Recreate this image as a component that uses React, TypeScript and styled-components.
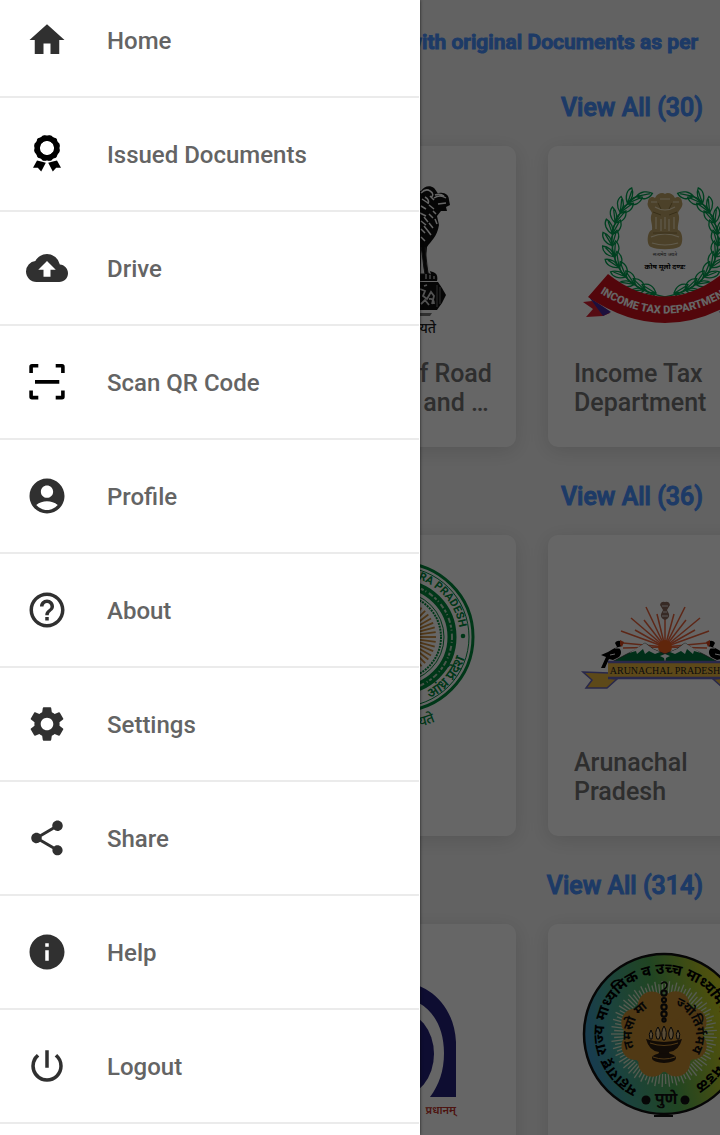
import React from 'react';
import styled, { createGlobalStyle } from 'styled-components';
import {
  MdHome,
  MdCloudUpload,
  MdAccountCircle,
  MdHelpOutline,
  MdSettings,
  MdShare,
  MdInfo,
  MdPowerSettingsNew,
} from 'react-icons/md';

const GlobalStyle = createGlobalStyle`
  * { box-sizing: border-box; }
  body {
    margin: 0;
    background: #f5f5f5;
    font-family: Roboto, "Noto Sans", sans-serif;
  }
`;

const Shell = styled.div`
  position: relative;
  height: 100vh;
  overflow: hidden;
`;

const Notice = styled.p`
  display: flex;
  justify-content: flex-end;
  margin: 0;
  padding: 28px 22px 2px;
  font-size: 21px;
  line-height: 28px;
  font-weight: 600;
  -webkit-text-stroke: 1px #4a92ff;
  white-space: nowrap;
  color: #4a92ff;
`;

const SectionHeader = styled.header`
  display: flex;
  justify-content: flex-end;
  padding: 36px 17px 24px;
`;

const ViewAll = styled.a`
  font-size: 25px;
  line-height: 28px;
  font-weight: 500;
  -webkit-text-stroke: 1px #4a92ff;
  color: #4a92ff;
  text-decoration: none;
`;

const CardRow = styled.div`
  display: flex;
  gap: 32px;
  padding: 0 16px;
`;

const Card = styled.article`
  flex: none;
  display: flex;
  flex-direction: column;
  align-items: center;
  gap: 20px;
  width: 234px;
  height: 301px;
  padding: 29px 26px;
  border-radius: 10px;
  background: #fff;
  box-shadow: 0 4px 20px rgba(0, 0, 0, 0.12);
`;

const Emblem = styled.svg`
  flex: none;
  width: 164px;
  height: 164px;
  overflow: visible;
`;

const CardTitle = styled.h3`
  align-self: stretch;
  margin: 0;
  font-size: 25px;
  line-height: 29px;
  font-weight: 500;
  white-space: nowrap;
  color: #747474;
`;

const Scrim = styled.div`
  position: absolute;
  inset: 0;
  background: rgba(0, 0, 0, 0.6);
`;

const Drawer = styled.nav`
  position: absolute;
  top: 0;
  bottom: 0;
  left: 0;
  width: 420px;
  max-width: 80%;
  padding-right: 1px;
  overflow: hidden;
  background: #fff;
  box-shadow: 0 0 3px rgba(0, 0, 0, 0.7);
`;

const Menu = styled.ul`
  margin: -16px 0 0;
  padding: 0;
  list-style: none;
`;

const MenuItem = styled.li`
  border-bottom: 2px solid #ebebeb;
`;

const MenuLink = styled.a<{ $black?: boolean }>`
  display: flex;
  align-items: center;
  gap: 39px;
  height: 112px;
  padding: 0 26px;
  color: ${(p) => (p.$black ? '#000' : '#303030')};
  text-decoration: none;

  svg {
    flex: none;
    width: 42px;
    height: 42px;
  }
`;

const MenuLabel = styled.span`
  padding-top: 2px;
  font-size: 24px;
  line-height: 28px;
  font-weight: 500;
  color: #646464;
`;

const deva = '"Noto Sans Devanagari", "Noto Sans", sans-serif';

function polar(cx: number, cy: number, r: number, deg: number): [number, number] {
  const a = (deg * Math.PI) / 180;
  return [cx + r * Math.cos(a), cy + r * Math.sin(a)];
}

function RibbonIcon() {
  const bumps = [];
  for (let i = 0; i < 12; i++) {
    const [x, y] = polar(21, 15, 10, i * 30 + 15);
    bumps.push(<circle key={i} cx={x} cy={y} r="3.1" />);
  }
  return (
    <svg viewBox="0 0 42 42" fill="currentColor" aria-hidden="true">
      {bumps}
      <circle cx="21" cy="15" r="9.8" fill="none" stroke="currentColor" strokeWidth="5.4" />
      <circle cx="21" cy="15" r="6.8" fill="#fff" />
      <path d="M11 27.5 Q15 28.5 19.8 29.8 L15.2 38.5 L11.8 34.8 H7 Z M31 27.5 Q27 28.5 22.2 29.8 L26.8 38.5 L30.2 34.8 H35 Z" />
    </svg>
  );
}

function ScanIcon() {
  return (
    <svg viewBox="0 0 42 42" fill="none" stroke="currentColor" strokeWidth="3.6" aria-hidden="true">
      <path d="M12.3 4.8 H6 Q5.1 4.8 5.1 5.7 V12 M29.7 4.8 H36 Q36.9 4.8 36.9 5.7 V12 M12.3 36.6 H6 Q5.1 36.6 5.1 35.7 V29.4 M29.7 36.6 H36 Q36.9 36.6 36.9 35.7 V29.4 M9 20.9 H33.3" />
    </svg>
  );
}

function LionHalf() {
  return (
    <g>
      <path
        d="M82 20 C90 12 98 14 104 16 C107 11 113 10 117 13 C120 16 120 19 122 18 C128 17 132 20 132 25 L133 30 L129 32 L130 36 L124 36 L120 41 L122 50 C120 62 114 66 110 72 L109 84 C110 92 111 96 116 97 C120 98 121 102 120 106 L82 106 Z"
        fill="#111"
      />
      <path
        d="M104 18 q5 -5 9 -2 q5 3 1 7 M117 23 q6 -4 12 0 M118 20 q5 -2 9 1 M121 29 l8 -1 M105 24 l6 4 M104 31 l5 3 M112 30 l5 4 M103 38 l6 3 M112 39 l4 4 M104 46 l5 4 M112 48 l4 5 M104 54 l4 4 M111 56 l3 4 M104 62 l4 4 M118 44 l2 5 M116 36 l3 3 M96 26 l5 4 M95 36 l5 4 M95 46 l5 4 M95 56 l5 4 M108 22 q5 3 3 7 M107 42 l4 5 M107 51 l4 5 M113 21 l4 4"
        fill="none"
        stroke="#fff"
        strokeWidth="1.5"
      />
      <path d="M104 72 C106 80 106 90 108 99 L103 99 Z M108 72 L110 91 L111 98 L114 100" fill="#eee" stroke="#222" />
      <path d="M109 104 v-5 M113 104 v-4 M117 104 v-3" stroke="#fff" />
      <path d="M82 107 L121 107 L125 113 L129 120 L125 128 L120 135 L82 135 Z" fill="#111" />
      <path d="M120 110 v22 M123 112 v17" stroke="#777" />
      <path
        d="M103 114 l5 2 l-2 5 l4 3 l4 -7 l3 4 l-2 8 M104 129 l4 -4 l4 5 M107 111 l3 -1 M112 124 q5 -1 5 5"
        fill="none"
        stroke="#ccc"
        strokeWidth="1.8"
      />
      <path d="M82 138 H115 L113 141 H82 Z" fill="#777" />
    </g>
  );
}

function MinistryEmblem() {
  return (
    <Emblem viewBox="0 0 164 164" role="img" aria-label="State emblem">
      <LionHalf />
      <g transform="translate(164 0) scale(-1 1)">
        <LionHalf />
      </g>
      <text x="119" y="158" textAnchor="end" fontFamily={deva} fontSize="14" fontWeight="500" fill="#222">
        सत्यमेव जयते
      </text>
    </Emblem>
  );
}

function WreathHalf() {
  const leaves = [];
  for (let i = 0; i < 12; i++) {
    const deg = 100 + i * 12.5;
    const [x, y] = polar(82, 66, 53, deg);
    leaves.push(
      <g key={i} transform={`translate(${x} ${y}) rotate(${deg + 90})`}>
        {i < 11 && <path d="M0 0 C3 -7 9 -10 14 -8 C12 -3 6 1 0 0 Z M0 0 L12 -6" />}
        <path d="M0 0 C3 7 9 9 15 6 C12 1 6 -2 0 0 Z M0 0 L13 5" />
      </g>
    );
  }
  return (
    <g fill="none" stroke="#00a050" strokeWidth="1.3">
      <path d="M89 123 C50 118 29 96 29 65 C29 46 41 30 54 21" />
      {leaves}
    </g>
  );
}

function GoldCapital() {
  return (
    <g>
      <path
        d="M65 27 C65 22 70 21 72 23 C74 18 80 17 82 19 C84 17 90 18 92 23 C94 21 99 22 99 27 C101 31 96 35 95 38 C98 44 94 49 95 55 C100 56 101 70 96 72 C90 75 74 75 68 72 C63 70 64 56 69 55 C70 49 66 44 69 38 C68 35 63 31 65 27 Z"
        fill="#bfa468"
      />
      <path
        d="M68 27 h6 M77 24 h10 M90 27 h6 M72 32 q10 6 20 0 M73 42 v12 M78 44 v12 M82 42 v12 M86 44 v12 M91 42 v12 M68 62 q14 -6 28 0 M69 68 q13 4 26 0"
        fill="none"
        stroke="#f0e2bd"
        strokeWidth="1.2"
      />
      <path d="M70 37 l8 3 M94 37 l-8 3 M75 28 l3 6 M89 28 l-3 6 M70 58 h24" stroke="#8e763e" />
    </g>
  );
}

function IncomeTaxEmblem() {
  return (
    <Emblem viewBox="0 0 164 164" role="img" aria-label="Income Tax Department emblem">
      <defs>
        <path id="it-band" d="M8 112 Q82 165 156 112" />
      </defs>
      <WreathHalf />
      <g transform="translate(164 0) scale(-1 1)">
        <WreathHalf />
      </g>
      <GoldCapital />
      <text x="82" y="81" textAnchor="middle" fontFamily={deva} fontSize="5" fill="#333">
        सत्यमेव जयते
      </text>
      <text x="82" y="94" textAnchor="middle" fontFamily={deva} fontSize="7" fontWeight="700" fill="#000">
        कोष मूलो दण्डः
      </text>
      <path d="M0 127 L9 126 L27 138 L20 141 L3 142 L10 134 Z M164 127 L155 126 L137 138 L144 141 L161 142 L154 134 Z" fill="#d81f30" />
      <path d="M6 122 L28 137 L20 141 Z M158 122 L136 137 L144 141 Z" fill="#46289a" />
      <path d="M25 99 Q82 144 139 99 L159 122 Q82 174 5 122 Z" fill="#d0101c" />
      <text fontFamily="Roboto, sans-serif" fontSize="11" fontWeight="800" fill="#fff">
        <textPath href="#it-band" startOffset="50%" textAnchor="middle">
          INCOME TAX DEPARTMENT
        </textPath>
      </text>
    </Emblem>
  );
}

function AndhraEmblem() {
  const rays = [];
  for (let i = 0; i < 48; i++) {
    const [x1, y1] = polar(82, 73, 16, i * 7.5);
    const [x2, y2] = polar(82, 73, 37, i * 7.5);
    rays.push(<path key={i} d={`M${x1} ${y1} L${x2} ${y2}`} />);
  }
  return (
    <Emblem viewBox="0 0 164 164" role="img" aria-label="Andhra Pradesh emblem">
      <defs>
        <path id="ap-top" d="M21 73 A61 61 0 0 1 143 73" />
        <path id="ap-low" d="M82 142 A69 69 0 0 0 151 73" />
        <path id="ap-out" d="M-10 73 A92 92 0 0 0 174 73" />
      </defs>
      <g fill="none" stroke="#008a3c">
        <circle cx="82" cy="73" r="74" strokeWidth="3" />
        <circle cx="82" cy="73" r="70" strokeWidth="1" />
        <circle cx="82" cy="73" r="53" strokeWidth="9" />
        <circle cx="82" cy="73" r="53" strokeWidth="2" stroke="#b8d8be" strokeDasharray="3 2 1 3 5 2" />
        <circle cx="82" cy="73" r="45" strokeWidth="1" />
        <circle cx="82" cy="73" r="42" strokeWidth="2" strokeDasharray="2 1" />
      </g>
      <g stroke="#c88a3c" strokeWidth="1.8">{rays}</g>
      <text fontFamily="Roboto, sans-serif" fontSize="11" fontWeight="700" fill="#008a3c">
        <textPath href="#ap-top" startOffset="95%" textAnchor="end">
          ANDHRA PRADESH
        </textPath>
      </text>
      <circle cx="146" cy="72" r="2.3" fill="#008a3c" />
      <text fontFamily={deva} fontSize="14" fontWeight="600" fill="#008a3c">
        <textPath href="#ap-low" startOffset="55%" textAnchor="middle">
          आंध्र प्रदेश
        </textPath>
      </text>
      <text fontFamily={deva} fontSize="14" fontWeight="500" fill="#008a3c">
        <textPath href="#ap-out" startOffset="63%" textAnchor="end">
          सत्यमेव जयते
        </textPath>
      </text>
    </Emblem>
  );
}

function ArunachalHalf() {
  return (
    <g>
      <path d="M29 98 L42 91 L52 86 L62 79 L70 85 L77 88 L82 90 L82 98 Z" fill="#00763e" stroke="#333" strokeWidth="0.8" />
      <path d="M46 89 L62 79 L70 85 L77 88 L72 90 L66 87 L62 90 L60 85 L54 90 L53 87 Z" fill="#fff" />
      <path
        d="M32 79 C34 76 39 76 39 80 C39 83 36 83 34 83 C39 85 39 90 36 93 L30 96 L26 95 L22 104 L18 104 L23 93 L18 91 L25 88 L30 85 L34 83 Z"
        fill="#000"
      />
      <path d="M37 76 L41 78 L39 83 L37 81 Z" fill="#d8471f" />
      <path d="M27 91 L32 90 M32 84 L36 84" stroke="#fff" />
      <path d="M0 108 L26 109 L26 114 L34 115 L24 124 L3 124 L9 116 Z" fill="#e9b640" stroke="#6665b8" strokeWidth="1.5" />
    </g>
  );
}

function ArunachalEmblem() {
  const tips = [
    [63, 43], [48, 54], [61, 56], [38, 67], [52, 66], [40, 79], [74, 50], [40, 84],
    [102, 43], [117, 54], [103, 56], [126, 67], [112, 66], [124, 79], [91, 50], [124, 84], [82, 54],
  ];
  return (
    <Emblem viewBox="0 0 164 164" role="img" aria-label="Arunachal Pradesh emblem">
      <g stroke="#e8623a" strokeWidth="1.5">
        {tips.map(([x, y], i) => (
          <path key={i} d={`M82 83 L${x} ${y}`} />
        ))}
      </g>
      <circle cx="82" cy="83" r="7" fill="#f0601c" />
      <path d="M77 41 Q78 37 82 38 Q86 37 87 41 L84 46 L86 50 Q87 54 82 56 Q77 54 78 50 L80 46 Z" fill="#8b6a5c" />
      <path d="M79 42 h6 M80 48 h4 M79 52 h6" stroke="#ddd" />
      <ArunachalHalf />
      <g transform="translate(164 0) scale(-1 1)">
        <ArunachalHalf />
      </g>
      <path d="M77 92 L82 90 L87 92 L83 94 L82 99 L81 94 Z" fill="#fff" />
      <rect x="25" y="98" width="114" height="16" fill="#e9b640" />
      <path d="M25 98 H139 M25 114 H139" stroke="#6665b8" strokeWidth="2.4" />
      <text x="82" y="110" textAnchor="middle" fontFamily='"Liberation Serif", serif' fontSize="10" fill="#222">
        ARUNACHAL PRADESH
      </text>
    </Emblem>
  );
}

function HighwaysEmblem() {
  return (
    <Emblem viewBox="0 0 164 164" role="img" aria-label="National highways logo">
      <path
        d="M25 144 V89 C27 50 55 29 82 29 C109 29 137 50 139 89 V144 H113 C122 132 127 118 127 100 C127 66 107 45 82 45 C57 45 37 66 37 100 C37 118 42 132 51 144 Z"
        fill="#25227c"
      />
      <ellipse cx="82" cy="101" rx="35" ry="43" fill="#25227c" />
      <text x="139" y="161" textAnchor="end" fontFamily={deva} fontSize="11" fontWeight="600" fill="#c0332b">
        प्रधानम्
      </text>
    </Emblem>
  );
}

function BoardEmblem() {
  const spokes = [];
  for (let i = 0; i < 90; i++) {
    const [x1, y1] = polar(81, 81, 40, i * 4);
    const [x2, y2] = polar(81, 81, i % 2 ? 53 : 50, i * 4);
    spokes.push(<path key={i} d={`M${x1} ${y1} L${x2} ${y2}`} />);
  }
  const lobes = [];
  for (let i = 0; i < 8; i++) {
    const [x, y] = polar(81, 81, 31, i * 45 + 22);
    lobes.push(<circle key={i} cx={x} cy={y} r="14" />);
  }
  return (
    <Emblem viewBox="0 0 164 164" role="img" aria-label="Maharashtra board emblem">
      <defs>
        <linearGradient id="mh-sky" x1="0" y1="0.6" x2="1" y2="0.4">
          <stop offset="0" stopColor="#3b93cc" />
          <stop offset="0.2" stopColor="#45a89a" />
          <stop offset="0.5" stopColor="#52ac55" />
          <stop offset="0.8" stopColor="#b5c428" />
          <stop offset="1" stopColor="#e2da1c" />
        </linearGradient>
        <path id="mh-ring" d="M55 135 A60 60 0 1 1 107 135" />
        <path id="mh-left" d="M55 102 A32 32 0 0 1 73 52" />
        <path id="mh-right" d="M88 51 A32 32 0 0 1 106 102" />
      </defs>
      <circle cx="81" cy="81" r="80" fill="url(#mh-sky)" stroke="#111" strokeWidth="2.5" />
      <g stroke="#d6e4ca" strokeWidth="1.3">{spokes}</g>
      <g fill="#c98e34">
        <circle cx="81" cy="81" r="38" />
        {lobes}
      </g>
      <text fontFamily={deva} fontSize="15" fontWeight="700" fill="#000">
        <textPath href="#mh-ring" startOffset="0">
          महाराष्ट्र राज्य माध्यमिक व उच्च माध्यमिक शिक्षण मंडळ
        </textPath>
      </text>
      <text fontFamily={deva} fontSize="13" fontWeight="700" fill="#111">
        <textPath href="#mh-left" startOffset="50%" textAnchor="middle">
          तमसो मा
        </textPath>
      </text>
      <text fontFamily={deva} fontSize="13" fontWeight="700" fill="#111">
        <textPath href="#mh-right" startOffset="50%" textAnchor="middle">
          ज्योतिर्गमय
        </textPath>
      </text>
      <path d="M78 31 q4 -4 6 0 q0 4 -3 5" fill="none" stroke="#111" strokeWidth="1.6" />
      <g fill="none" stroke="#111" strokeWidth="2.2">
        <circle cx="81" cy="40" r="2.6" />
        <circle cx="81" cy="47" r="2" />
        <circle cx="81" cy="54" r="2.6" />
        <circle cx="81" cy="61" r="2.6" />
        <circle cx="81" cy="67" r="1.6" />
      </g>
      <path d="M63 86 Q81 92 99 86 Q96 98 86 99 L87 103 H75 L76 99 Q66 98 63 86 Z" fill="#2b1c10" />
      <ellipse cx="81" cy="105" rx="12" ry="5" fill="#2b1c10" />
      <path d="M70 104 q11 4 22 0 M67 90 q14 5 28 0" fill="none" stroke="#c98e34" />
      <path
        d="M67 86 q-2 -5 1 -9 q3 4 1 9 Z M74 86 q-3 -7 1 -12 q4 6 1 12 Z M80 87 q-3 -8 1 -14 q4 6 1 14 Z M87 86 q-3 -6 1 -12 q4 6 1 12 Z M94 86 q-2 -5 1 -9 q3 4 1 9 Z"
        fill="#e0bd84"
        stroke="#111"
      />
      <circle cx="63" cy="147" r="4.5" fill="#111" />
      <circle cx="102" cy="147" r="4.5" fill="#111" />
      <text x="83" y="151" textAnchor="middle" fontFamily={deva} fontSize="16" fontWeight="700" fill="#111">
        पुणे
      </text>
      <path d="M71 163 H90" stroke="#111" strokeWidth="2" />
    </Emblem>
  );
}

const menu = [
  { label: 'Home', icon: <MdHome /> },
  { label: 'Issued Documents', icon: <RibbonIcon />, black: true },
  { label: 'Drive', icon: <MdCloudUpload /> },
  { label: 'Scan QR Code', icon: <ScanIcon />, black: true },
  { label: 'Profile', icon: <MdAccountCircle /> },
  { label: 'About', icon: <MdHelpOutline /> },
  { label: 'Settings', icon: <MdSettings /> },
  { label: 'Share', icon: <MdShare /> },
  { label: 'Help', icon: <MdInfo /> },
  { label: 'Logout', icon: <MdPowerSettingsNew /> },
];

const sections = [
  {
    count: 30,
    cards: [
      { lines: ['Ministry of Road', 'Transport and …'], art: <MinistryEmblem /> },
      { lines: ['Income Tax', 'Department'], art: <IncomeTaxEmblem /> },
    ],
  },
  {
    count: 36,
    cards: [
      { lines: [], art: <AndhraEmblem /> },
      { lines: ['Arunachal', 'Pradesh'], art: <ArunachalEmblem /> },
    ],
  },
  {
    count: 314,
    cards: [
      { lines: [], art: <HighwaysEmblem /> },
      { lines: [], art: <BoardEmblem /> },
    ],
  },
];

export default function App() {
  return (
    <Shell>
      <GlobalStyle />
      <main>
        <Notice>with original Documents as per</Notice>
        {sections.map((section) => (
          <section key={section.count}>
            <SectionHeader>
              <ViewAll href="#">View All ({section.count})</ViewAll>
            </SectionHeader>
            <CardRow>
              <Card />
              {section.cards.map((card, i) => (
                <Card key={i}>
                  {card.art}
                  {card.lines.length > 0 && (
                    <CardTitle>
                      {card.lines[0]}
                      <br />
                      {card.lines[1]}
                    </CardTitle>
                  )}
                </Card>
              ))}
            </CardRow>
          </section>
        ))}
      </main>
      <Scrim />
      <Drawer>
        <Menu>
          {menu.map((item) => (
            <MenuItem key={item.label}>
              <MenuLink href="#" $black={item.black}>
                {item.icon}
                <MenuLabel>{item.label}</MenuLabel>
              </MenuLink>
            </MenuItem>
          ))}
        </Menu>
      </Drawer>
    </Shell>
  );
}
